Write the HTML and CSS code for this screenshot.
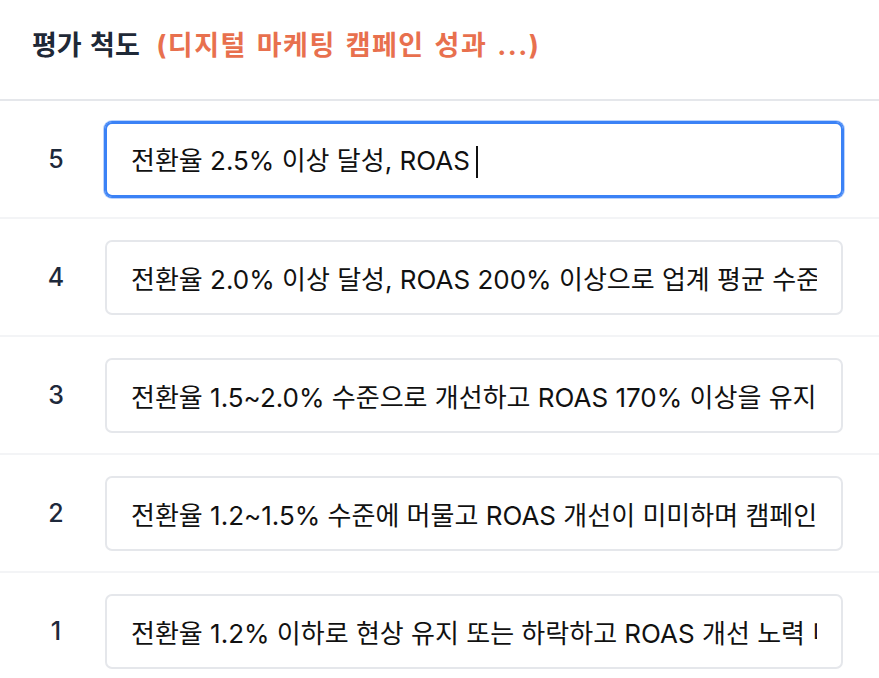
FILE: index.html
```html
<!DOCTYPE html>
<html lang="ko">
<head>
  <meta charset="UTF-8" />
  <meta name="viewport" content="width=device-width, initial-scale=1.0"/>
  <title>평가 척도</title>
  <link rel="stylesheet" href="styles.css">
</head>
<body>
  <header class="scale-header">
    <h2>평가 척도 <span class="subject">(디지털 마케팅 캠페인 성과 ...)</span></h2>
  </header>

  <div class="scale-list">
    <div class="scale-row">
      <div class="score">5</div>
      <div class="field focused"><span class="field-text">전환율 2.5% 이상 달성, ROAS<span class="caret"></span></span></div>
    </div>
    <div class="scale-row">
      <div class="score">4</div>
      <div class="field"><span class="field-text">전환율 2.0% 이상 달성, ROAS 200% 이상으로 업계 평균 수준 유지</span></div>
    </div>
    <div class="scale-row">
      <div class="score">3</div>
      <div class="field"><span class="field-text">전환율 1.5~2.0% 수준으로 개선하고 ROAS 170% 이상을 유지</span></div>
    </div>
    <div class="scale-row">
      <div class="score">2</div>
      <div class="field"><span class="field-text">전환율 1.2~1.5% 수준에 머물고 ROAS 개선이 미미하며 캠페인 효율 저하</span></div>
    </div>
    <div class="scale-row">
      <div class="score">1</div>
      <div class="field"><span class="field-text">전환율 1.2% 이하로 현상 유지 또는 하락하고 ROAS 개선 노력 미흡</span></div>
    </div>
  </div>
</body>
</html>
```

FILE: styles.css
```css
body {
  margin: 0;
  background: #ffffff;
  color: #111827;
  font-family: Inter, "Noto Sans CJK KR", sans-serif;
}
.scale-header {
  height: 101px;
  padding: 0 32px 12px;
  display: flex;
  align-items: center;
  border-bottom: 2px solid #e5e7eb;
  box-sizing: border-box;
}
.scale-header h2 {
  margin: 0;
  font-size: 27px;
  font-weight: 700;
  color: #1f2937;
  word-spacing: 2px;
}
.subject {
  margin-left: 8px;
  color: #e8704e;
  letter-spacing: 1.5px;
}
.scale-row {
  display: flex;
  align-items: center;
  gap: 25px;
  height: 118px;
  padding: 0 36px 0 32px;
  border-bottom: 2px solid #f3f4f6;
  box-sizing: border-box;
}
.score {
  width: 48px;
  text-align: center;
  font-size: 25px;
  font-weight: 500;
  color: #1e293b;
}
.field {
  flex: 1;
  height: 75px;
  display: flex;
  align-items: center;
  padding: 0 24px;
  border: 2px solid #e5e7eb;
  border-radius: 7px;
  box-sizing: border-box;
  font-size: 26px;
  color: #111111;
  min-width: 0;
}
.field.focused {
  border-color: #3b82f6;
  box-shadow: 0 0 0 1px #3b82f6, 0 0 0 2px rgba(59, 130, 246, 0.35);
}
.field-text {
  display: block;
  overflow: hidden;
  white-space: nowrap;
  width: 100%;
}
.caret {
  display: inline-block;
  width: 2px;
  height: 32px;
  margin-left: 6px;
  background: #111111;
  vertical-align: middle;
}
```
